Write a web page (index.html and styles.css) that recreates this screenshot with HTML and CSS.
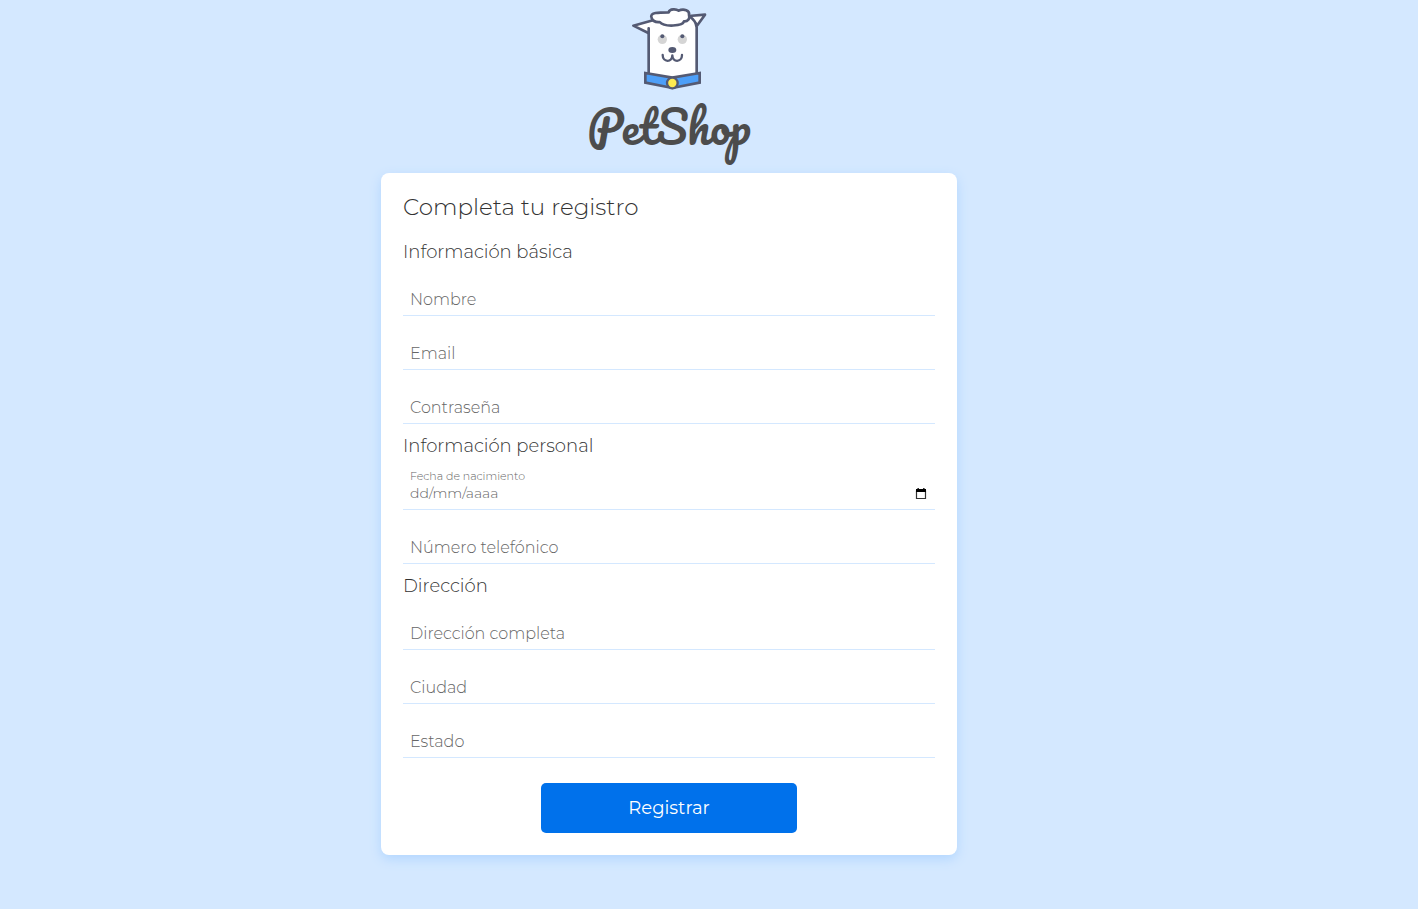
FILE: index.html
```html
<!DOCTYPE html>
<html lang="es">
<head>
<meta charset="utf-8">
<meta name="viewport" content="width=device-width, initial-scale=1">
<title>PetShop</title>
<link rel="stylesheet" href="styles.css">
</head>
<body>
<header class="brand">
  <svg class="brand-icon" viewBox="-3 0 300 285" aria-hidden="true" stroke-linejoin="round" stroke-linecap="round">
    <g fill="#fff" stroke="#545a73" stroke-width="8">
      <path d="M207 48 255 44 232 76Z"/>
      <path d="M85 222V66Q105 50 135 46H205Q226 58 230 78V222L157 232Z" stroke="none"/>
      <path d="M85 99 40 77 99 61" />
      <path d="M86 85V222M230 222V82Q228 62 207 48" fill="none"/>
      <path d="M95 54C87 37 117 37 146 37C149 25 170 27 175 32C192 25 210 31 207 45C211 56 203 65 192 64C189 79 132 82 119 66C107 67 98 63 95 54Z"/>
    </g>
    <path d="M76 219 157 233 239 219V248L157 264 76 248Z" fill="#4d9ff8" stroke="#545a73" stroke-width="8" stroke-linejoin="miter"/>
    <circle cx="157" cy="249" r="16" fill="#ffeb50" stroke="#545a73" stroke-width="7"/>
    <circle cx="127" cy="118" r="14" fill="#d5d5d5"/>
    <circle cx="187" cy="118" r="14" fill="#d5d5d5"/>
    <circle cx="127" cy="109" r="6" fill="#545a73"/>
    <circle cx="187" cy="109" r="6" fill="#545a73"/>
    <ellipse cx="157" cy="150" rx="12" ry="9" fill="#545a73"/>
    <path d="M128 165C128 188 157 188 157 166C157 188 186 188 186 165" fill="none" stroke="#545a73" stroke-width="7"/>
  </svg>
  <span class="brand-name">PetShop</span>
</header>
<main class="card">
  <h1 class="title">Completa tu registro</h1>
  <form class="form">
    <h2 class="section">Información básica</h2>
    <div class="field"><input class="input" type="text" id="nombre"><label class="label" for="nombre">Nombre</label></div>
    <div class="field"><input class="input" type="email" id="email"><label class="label" for="email">Email</label></div>
    <div class="field"><input class="input" type="password" id="clave"><label class="label" for="clave">Contraseña</label></div>
    <h2 class="section">Información personal</h2>
    <div class="field">
      <input class="input input-date" type="text" id="nacimiento" placeholder="dd/mm/aaaa">
      <label class="label label-small" for="nacimiento">Fecha de nacimiento</label>
      <button class="calendar" type="button" aria-label="Abrir calendario">
        <svg class="calendar-icon" viewBox="0 0 12 13" aria-hidden="true"><path d="M1.500 4h9v7.500h-9z" fill="none" stroke="#333" stroke-width="1.200"/><path d="M1 2h10v3H1zM2.500 1h1.300v2H2.500zM8.200 1h1.300v2H8.200z" fill="#000"/></svg>
      </button>
    </div>
    <div class="field"><input class="input" type="tel" id="telefono"><label class="label" for="telefono">Número telefónico</label></div>
    <h2 class="section">Dirección</h2>
    <div class="field"><input class="input" type="text" id="direccion"><label class="label" for="direccion">Dirección completa</label></div>
    <div class="field"><input class="input" type="text" id="ciudad"><label class="label" for="ciudad">Ciudad</label></div>
    <div class="field"><input class="input" type="text" id="estado"><label class="label" for="estado">Estado</label></div>
    <button class="submit" type="submit">Registrar</button>
  </form>
</main>
</body>
</html>
```
FILE: styles.css
```css
* { box-sizing: border-box; }
body {
  margin: 0;
  padding-right: 80px;
  min-height: 100vh;
  background: #d4e8ff;
  color: #333;
  font-family: Montserrat, Inter, sans-serif;
  font-weight: 400;
}
.brand {
  display: flex;
  flex-direction: column;
  align-items: center;
}
.brand-icon { width: 100px; height: 95px; }
.brand-name {
  padding-bottom: 16px;
  font-family: Pacifico, Lato, cursive;
  font-size: 45px;
  line-height: 62px;
  color: #4c4c4c;
}
.card {
  width: 100%;
  max-width: 576px;
  margin: 0 auto 54px;
  padding: 22px;
  border-radius: 8px;
  background: #fff;
  box-shadow: 0 4px 12px #b2d6ff;
}
.title {
  margin: 0 0 11px;
  font-size: 23px;
  font-weight: 300;
  line-height: 24px;
}
.form { display: flex; flex-direction: column; }
.section {
  margin: 12px 0 0;
  font-size: 18px;
  font-weight: 300;
  line-height: 20px;
}
.field { display: grid; }
.input, .label, .calendar { grid-area: 1 / 1; }
.input {
  width: 100%;
  height: 54px;
  padding: 27px 7px 6px;
  border: 0;
  border-bottom: 1px solid #d4e8ff;
  border-radius: 0;
  outline: 0;
  background: transparent;
  color: #555;
  font: 300 16px/20px Montserrat, Inter, sans-serif;
}
.input::placeholder { color: #666; opacity: 1; }
.input-date { font-size: 14px; }
.label {
  align-self: end;
  justify-self: start;
  padding: 0 7px 6px;
  color: #666;
  font-size: 16px;
  font-weight: 300;
  line-height: 20px;
  pointer-events: none;
}
.label-small {
  align-self: start;
  padding: 14px 7px 0;
  font-size: 11px;
  line-height: 12px;
}
.calendar {
  align-self: end;
  justify-self: end;
  display: flex;
  margin: 0 8px 10px;
  padding: 0;
  border: 0;
  background: none;
}
.calendar-icon { width: 12px; height: 13px; }
.submit {
  align-self: center;
  width: 256px;
  height: 50px;
  margin-top: 25px;
  border: 0;
  border-radius: 5px;
  background: #0071eb;
  color: #fff;
  font: 400 18px/24px Montserrat, Inter, sans-serif;
}
```
